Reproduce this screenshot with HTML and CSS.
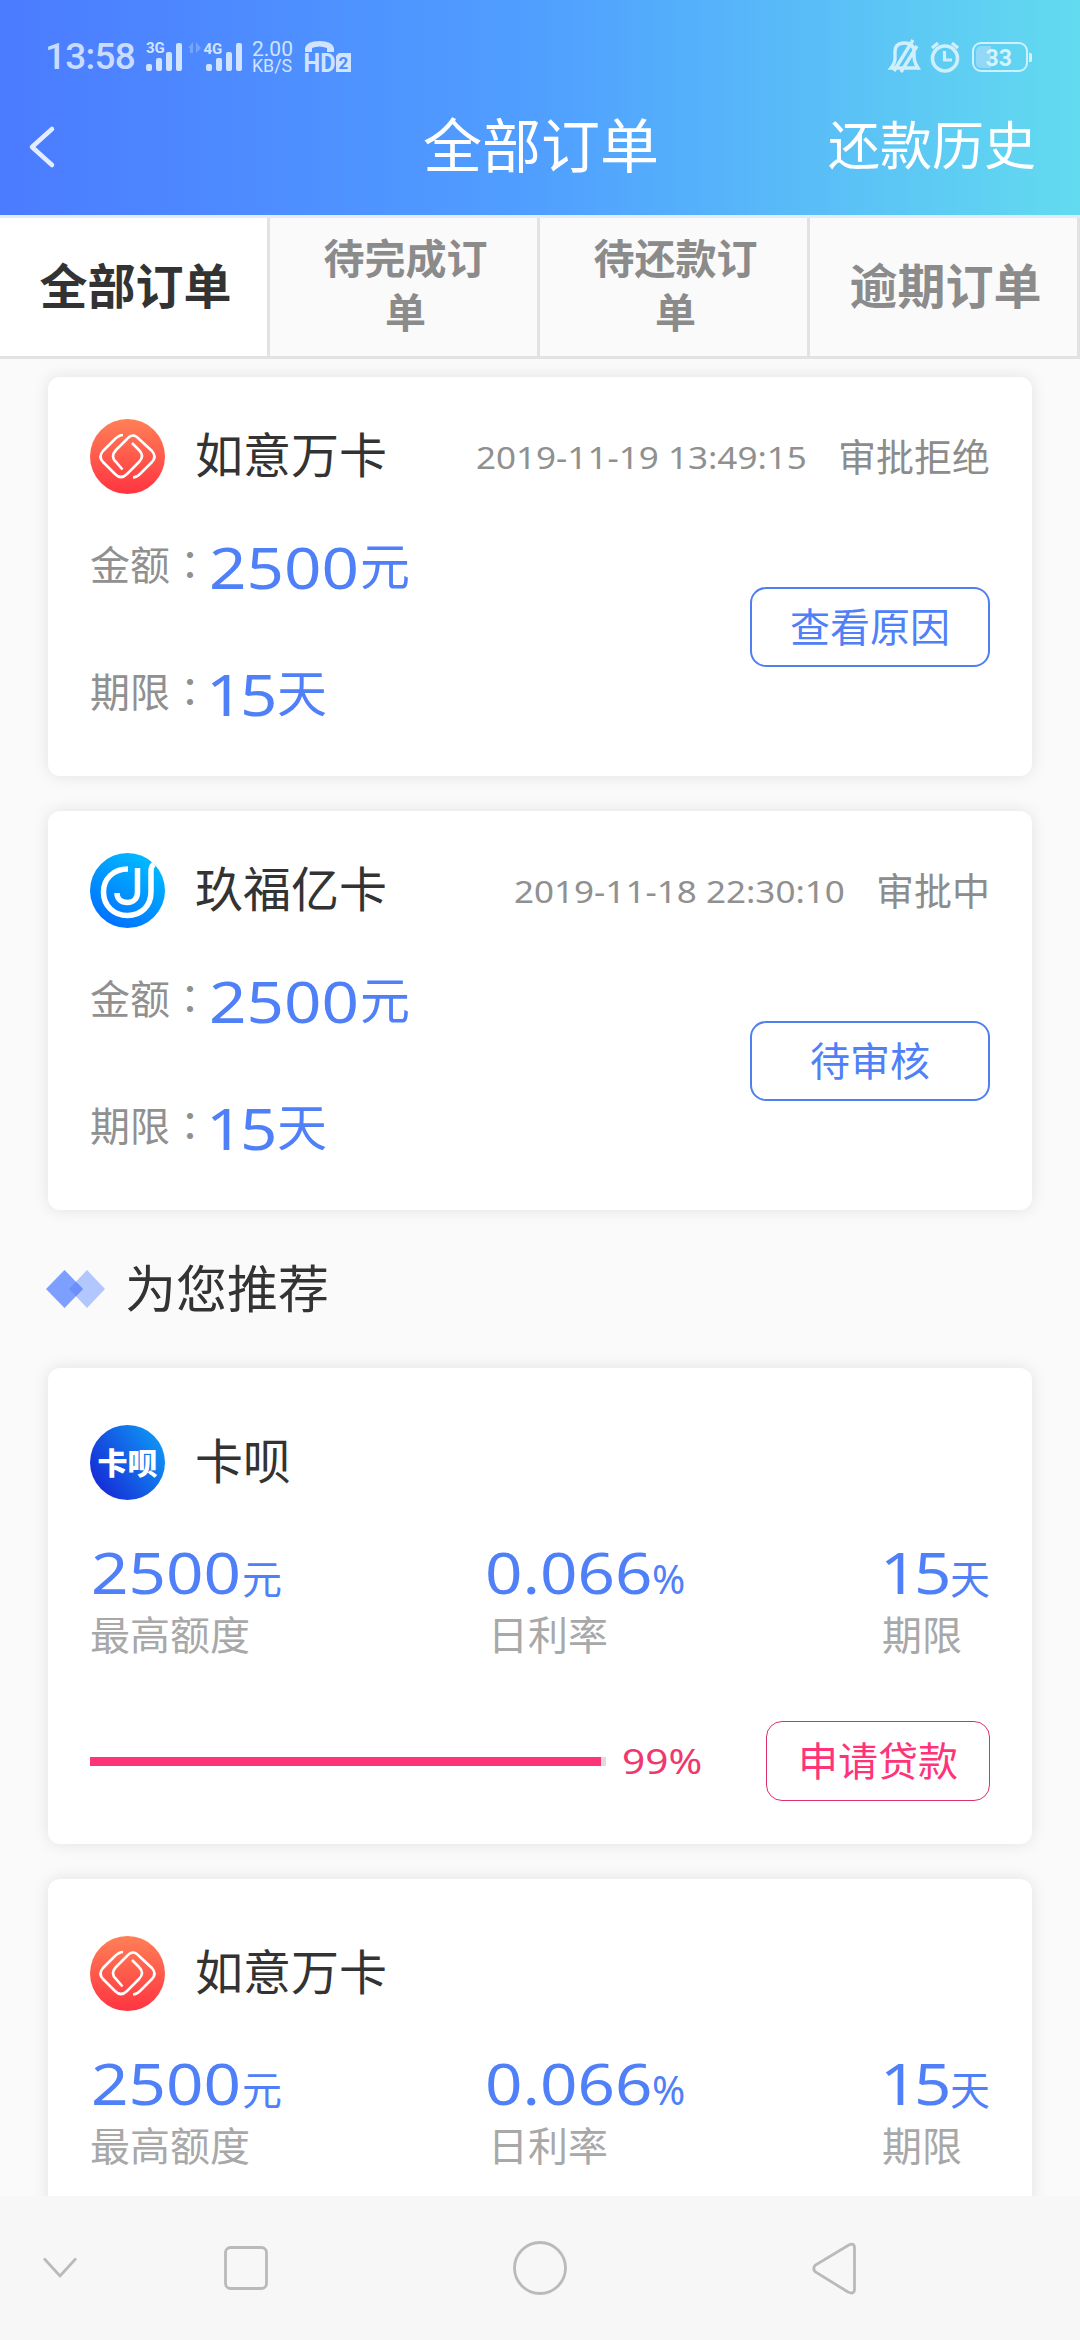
FILE: index.html
```html
<!DOCTYPE html>
<html lang="zh-CN">
<head>
<meta charset="utf-8">
<title>全部订单</title>
<link rel="stylesheet" href="styles.css">
</head>
<body>
<svg class="defs" aria-hidden="true">
  <defs>
    <linearGradient id="red" x1="0" y1="0" x2="0" y2="1"><stop offset="0" stop-color="#ff8057"/><stop offset="1" stop-color="#ff3440"/></linearGradient>
    <linearGradient id="sky" x1="0.8" y1="0" x2="0.2" y2="1"><stop offset="0" stop-color="#00bfff"/><stop offset="1" stop-color="#006dff"/></linearGradient>
    <linearGradient id="deep" x1="1" y1="0.25" x2="0.15" y2="0.8"><stop offset="0" stop-color="#0f96f5"/><stop offset="1" stop-color="#1632d8"/></linearGradient>
  </defs>
  <symbol id="logo-ruyi" viewBox="0 0 75 75">
    <circle cx="37.5" cy="37.5" r="37.5" fill="url(#red)"/>
    <g fill="none" stroke="#fff" stroke-width="2.6">
      <path d="M33 16C29 16 27 18 24 21L13 32Q8 37.500 13 43L25 55Q31 61 37 55L49 43Q55 37 49 31L42 24"/>
      <path d="M43 58.500C47 58.500 48 57 51 54L62 43Q67 37.500 62 32L49 20Q43 13 37 20L26 31Q20 37.500 26 43L32.500 50.500"/>
    </g>
  </symbol>
  <symbol id="logo-jiufu" viewBox="0 0 75 75">
    <circle cx="37.500" cy="37.500" r="37.500" fill="url(#sky)"/>
    <g fill="none" stroke="#fff" stroke-width="5.500">
      <path d="M38 16C23 16 13.500 26 13.500 39C13.500 53 24 62.500 37.500 62.500C51 62.500 61 53 61 39V18Q61 13 64 11"/>
      <path d="M47.500 15V39C47.500 46 43 49.500 37.500 49.500C31 49.500 27 46 27 40"/>
    </g>
  </symbol>
</svg>

<header class="header">
  <div class="statusbar">
    <span class="clock">13:58</span>
    <svg class="status-left" viewBox="140 30 220 50">
      <g class="status-fill">
        <text x="146" y="51" font-size="15" font-weight="700">3G</text>
        <rect x="146" y="62" width="6" height="7" rx="2"/><rect x="156" y="56" width="6" height="13" rx="2"/><rect x="166" y="50" width="6" height="19" rx="2"/><rect x="176" y="41" width="6" height="28" rx="2"/>
        <path opacity=".3" d="M188 46L193 40V51H190V46ZM196 40L201 46L196 51Z"/>
        <text x="203.500" y="52" font-size="15" font-weight="700">4G</text>
        <rect x="206" y="62" width="6" height="7" rx="2"/><rect x="216" y="56" width="6" height="13" rx="2"/><rect x="226" y="50" width="6" height="19" rx="2"/><rect x="236" y="41" width="6" height="28" rx="2"/>
        <text x="252" y="54" font-size="21" textLength="41">2.00</text>
        <text x="252" y="69.500" font-size="19" textLength="40" lengthAdjust="spacingAndGlyphs">KB/S</text>
        <path d="M305 50V46Q307 39 319.500 39Q332 39 334 46V50H327V46Q319 43 312 46V50Z"/>
        <text x="303.500" y="70" font-size="25" font-weight="700" textLength="32" lengthAdjust="spacingAndGlyphs">HD</text>
        <path d="M339 51H351V70H336V54Z"/>
      </g>
      <text class="sim" x="338.500" y="66.500" font-size="17" font-weight="700">2</text>
    </svg>
    <svg class="status-right" viewBox="880 30 160 50">
      <g class="status-line">
        <path d="M891 66C896 60 895 57 895 50Q895 41 904.500 41Q914 41 914 50C914 57 914 60 918 66ZM913 38L894 69M901 70L917 44" stroke-width="3.400"/>
        <circle cx="945" cy="56.500" r="12.500" stroke-width="3.600"/>
        <path d="M944.500 49V58H952M932 46L938 41M952 41L958 46" stroke-width="3.200"/>
        <rect x="973" y="41" width="54" height="28" rx="8" stroke-width="2"/>
      </g>
      <path class="status-fill" d="M1029 51h1.500q1.500 0 1.500 2v5q0 2-1.500 2h-1.500z"/>
      <path class="charge" d="M982 44h9v22h-9q-6 0-6-5v-12q0-5 6-5z"/>
      <text class="status-fill" x="985.500" y="64" font-size="23" font-weight="700">33</text>
    </svg>
  </div>
  <div class="titlebar">
    <svg class="back" viewBox="0 0 28 44"><path d="M24 4L4 22L24 40"/></svg>
    <h1 class="title">全部订单</h1>
    <a class="history">还款历史</a>
  </div>
</header>

<nav class="tabs">
  <div class="tab tab-active">全部订单</div>
  <div class="tab tab-small">待完成订单</div>
  <div class="tab tab-small">待还款订单</div>
  <div class="tab">逾期订单</div>
</nav>

<main class="content">
  <section class="card order">
    <div class="card-head">
      <svg class="logo"><use href="#logo-ruyi"/></svg>
      <h2 class="name">如意万卡</h2>
      <span class="date">2019-11-19 13:49:15</span>
      <span class="state">审批拒绝</span>
    </div>
    <div class="order-body">
      <div class="facts">
        <div class="fact"><span class="fact-label">金额<span lang="zh-TW" class="colon">：</span></span><span class="num num-amount">2500</span><span class="unit">元</span></div>
        <div class="fact"><span class="fact-label">期限<span lang="zh-TW" class="colon">：</span></span><span class="num num-days">15</span><span class="unit">天</span></div>
      </div>
      <button class="button button-blue">查看原因</button>
    </div>
  </section>

  <section class="card order">
    <div class="card-head">
      <svg class="logo"><use href="#logo-jiufu"/></svg>
      <h2 class="name">玖福亿卡</h2>
      <span class="date">2019-11-18 22:30:10</span>
      <span class="state">审批中</span>
    </div>
    <div class="order-body">
      <div class="facts">
        <div class="fact"><span class="fact-label">金额<span lang="zh-TW" class="colon">：</span></span><span class="num num-amount">2500</span><span class="unit">元</span></div>
        <div class="fact"><span class="fact-label">期限<span lang="zh-TW" class="colon">：</span></span><span class="num num-days">15</span><span class="unit">天</span></div>
      </div>
      <button class="button button-blue">待审核</button>
    </div>
  </section>

  <div class="section-head">
    <svg class="diamonds" viewBox="0 0 59 38"><path d="M41 0L59 19L41 38L23 19Z" fill="#b3c7ff"/><path d="M18.500 0L37 19L18.500 38L0 19Z" fill="#7d9fff"/><path d="M30 11.800L37 19L30 26.200L23 19Z" fill="#6b90fa"/></svg>
    <h2 class="section-title">为您推荐</h2>
  </div>

  <section class="card offer">
    <div class="card-head">
      <svg class="logo" viewBox="0 0 75 75"><circle cx="37.500" cy="37.500" r="37.500" fill="url(#deep)"/><text class="logo-text" x="7.500" y="48.500" textLength="60">卡呗</text></svg>
      <h2 class="name">卡呗</h2>
    </div>
    <div class="stats">
      <div class="stat"><div class="stat-value"><span class="num num-amount">2500</span><span class="unit">元</span></div><div class="stat-label">最高额度</div></div>
      <div class="stat"><div class="stat-value"><span class="num num-rate">0.066</span><span class="percent">%</span></div><div class="stat-label stat-label-rate">日利率</div></div>
      <div class="stat"><div class="stat-value"><span class="num num-days">15</span><span class="unit">天</span></div><div class="stat-label">期限</div></div>
    </div>
    <div class="apply">
      <div class="bar"><div class="bar-fill" style="width:99%"></div></div>
      <span class="bar-value">99%</span>
      <button class="button button-pink">申请贷款</button>
    </div>
  </section>

  <section class="card offer">
    <div class="card-head">
      <svg class="logo"><use href="#logo-ruyi"/></svg>
      <h2 class="name">如意万卡</h2>
    </div>
    <div class="stats">
      <div class="stat"><div class="stat-value"><span class="num num-amount">2500</span><span class="unit">元</span></div><div class="stat-label">最高额度</div></div>
      <div class="stat"><div class="stat-value"><span class="num num-rate">0.066</span><span class="percent">%</span></div><div class="stat-label stat-label-rate">日利率</div></div>
      <div class="stat"><div class="stat-value"><span class="num num-days">15</span><span class="unit">天</span></div><div class="stat-label">期限</div></div>
    </div>
  </section>
</main>

<footer class="navbar">
  <svg class="nav-down" viewBox="0 0 34 22"><path d="M1 1.500L17 19L33 1.500"/></svg>
  <svg class="nav-square" viewBox="0 0 44 44"><rect x="1.500" y="1.500" width="41" height="41" rx="5"/></svg>
  <svg class="nav-circle" viewBox="0 0 54 54"><circle cx="27" cy="27" r="25.500"/></svg>
  <svg class="nav-back" viewBox="0 0 44 53"><path d="M36 3.500L3.500 23Q0 26.500 3.500 30L36 50Q42.500 53 42.500 47V6Q42.500 0 36 3.500Z"/></svg>
</footer>
</body>
</html>
```
FILE: styles.css
```css
* { box-sizing: border-box; }
body {
  margin: 0;
  width: 1080px;
  height: 2340px;
  display: flex;
  flex-direction: column;
  overflow: hidden;
  background: #fafafa;
  color: #333;
  font-family: "Noto Sans", "Noto Sans CJK SC", sans-serif;
}
h1, h2 { margin: 0; font-weight: 400; }
svg { flex: none; display: block; }
.defs { width: 0; height: 0; position: absolute; }

.header {
  height: 215px;
  flex: none;
  background: linear-gradient(90deg, #4b7bff 0%, #509fff 50%, #62dbef 100%);
  color: #fff;
}
.statusbar {
  height: 112px;
  padding: 1px 40px 0 45px;
  display: flex;
  align-items: center;
  font-family: Roboto, sans-serif;
}
.clock { width: 95px; font-size: 37px; font-weight: 500; color: #c9dcff; letter-spacing: -0.8px; }
.status-left { width: 220px; height: 50px; }
.status-right { width: 160px; height: 50px; margin-left: auto; }
.status-fill { fill: #d0e4ff; }
.status-line { fill: none; stroke: #d0effc; }
.status-right .status-fill { fill: #d6f3fd; }
.charge { fill: #92d8f7; }
.sim { fill: #4b8cff; }
.titlebar {
  height: 66px;
  display: grid;
  grid-template-columns: 1fr auto 1fr;
  align-items: center;
  padding: 0 44px 0 28px;
}
.back { width: 28px; height: 44px; margin-top: 4px; fill: none; stroke: #e4edff; stroke-width: 4.5; stroke-linecap: round; stroke-linejoin: round; }
.title { font-size: 59px; line-height: 66px; padding-left: 18px; }
.history { font-size: 52px; line-height: 66px; justify-self: end; }

.tabs {
  height: 144px;
  flex: none;
  display: grid;
  grid-template-columns: repeat(4, 1fr);
  border-top: 3px solid #e1ebfa;
  border-bottom: 3px solid #e2e2e2;
}
.tab {
  display: flex;
  align-items: center;
  justify-content: center;
  text-align: center;
  border-right: 3px solid #e2e2e2;
  padding: 0 0 9px 4px;
  font-size: 48px;
  font-weight: 700;
  color: #8b8b8b;
}
.tab-active { background: #fff; color: #333; }
.tab-small { padding: 0 48px 5px 52px; font-size: 41px; line-height: 54px; word-break: break-all; }

.content {
  flex: 1;
  min-height: 0;
  overflow: hidden;
  padding: 18px 48px 0;
  display: flex;
  flex-direction: column;
}
.card {
  flex: none;
  background: #fff;
  border-radius: 12px;
  box-shadow: 0 0 16px rgba(0, 0, 0, 0.1);
}
.order { height: 399px; padding: 42px; margin-bottom: 35px; }
.offer { height: 476px; padding: 57px 42px 0; margin-bottom: 35px; }
.card-head { height: 75px; display: flex; align-items: center; }
.logo { width: 75px; height: 75px; }
.logo-text { font: 900 30px "Noto Sans CJK SC", sans-serif; fill: #fff; }
.name { margin-left: 30px; padding-bottom: 4px; font-size: 48px; line-height: 71px; }
.date {
  margin-left: auto;
  font-size: 31px;
  color: #909090;
  transform: scaleX(1.13);
  transform-origin: right center;
}
.state { margin-left: 31px; padding-bottom: 5px; font-size: 38px; color: #8c8c8c; }

.order-body { display: flex; align-items: flex-start; justify-content: space-between; }
.facts { padding-top: 38px; display: grid; grid-auto-rows: 127px; }
.fact { display: flex; align-items: center; height: 70px; }
.fact-label { width: 119px; padding-bottom: 9px; font-size: 40px; white-space: nowrap; color: #909090; }
.colon { font-family: "Noto Sans CJK TC", sans-serif; }
.num {
  display: block;
  font-size: 57px;
  color: #5080f8;
  white-space: nowrap;
  transform: scaleX(1.15);
  transform-origin: left center;
}
.num-amount { width: 151px; }
.num-rate { width: 167px; }
.num-days { width: 71px; margin-left: -3px; letter-spacing: -3px; }
.unit { padding-bottom: 7px; font-size: 50px; color: #5080f8; }
.button {
  height: 80px;
  padding: 0 0 5px;
  border-radius: 16px;
  background: #fff;
  font: 40px "Noto Sans CJK SC", sans-serif;
}
.order .button { width: 240px; margin-top: 93px; }
.button-blue { border: 2px solid #5080f0; color: #5080f8; }
.button-pink { width: 224px; border: 1px solid #dc3068; color: #ff3378; margin-left: auto; }

.section-head { height: 158px; margin-top: -35px; flex: none; display: flex; align-items: center; gap: 20px; margin-left: -2px; }
.diamonds { width: 59px; height: 38px; }
.section-title { padding-bottom: 6px; font-size: 51px; }

.stats { height: 131px; margin-top: 37px; display: grid; grid-template-columns: 394px 398px auto; }
.stat-value { display: flex; align-items: baseline; height: 72px; line-height: 70px; padding-left: 1px; }
.stat .unit { padding: 0; font-size: 40px; }
.stat .num-days { width: 70px; }
.percent { font-size: 40px; color: #5080f8; }
.stat-label { font-size: 40px; line-height: 52px; color: #a8a8a8; }
.stat-label-rate { padding-left: 4px; }
.apply { height: 80px; margin-top: 53px; display: flex; align-items: center; }
.bar { width: 516px; height: 9px; background: #ddd; }
.bar-fill { height: 9px; background: #ff3378; }
.bar-value {
  margin-left: 16px;
  padding-bottom: 2px;
  font-size: 35px;
  color: #f0386f;
  transform: scaleX(1.16);
  transform-origin: left center;
}

.navbar {
  height: 144px;
  flex: none;
  display: flex;
  align-items: center;
  padding-left: 43px;
  background: #f7f7f7;
  fill: none;
  stroke: #bababa;
  stroke-width: 2.8;
}
.nav-down { width: 34px; height: 22px; }
.nav-square { width: 44px; height: 44px; margin-left: 147px; }
.nav-circle { width: 54px; height: 54px; margin-left: 245px; }
.nav-back { width: 44px; height: 53px; margin-left: 245px; }
```
